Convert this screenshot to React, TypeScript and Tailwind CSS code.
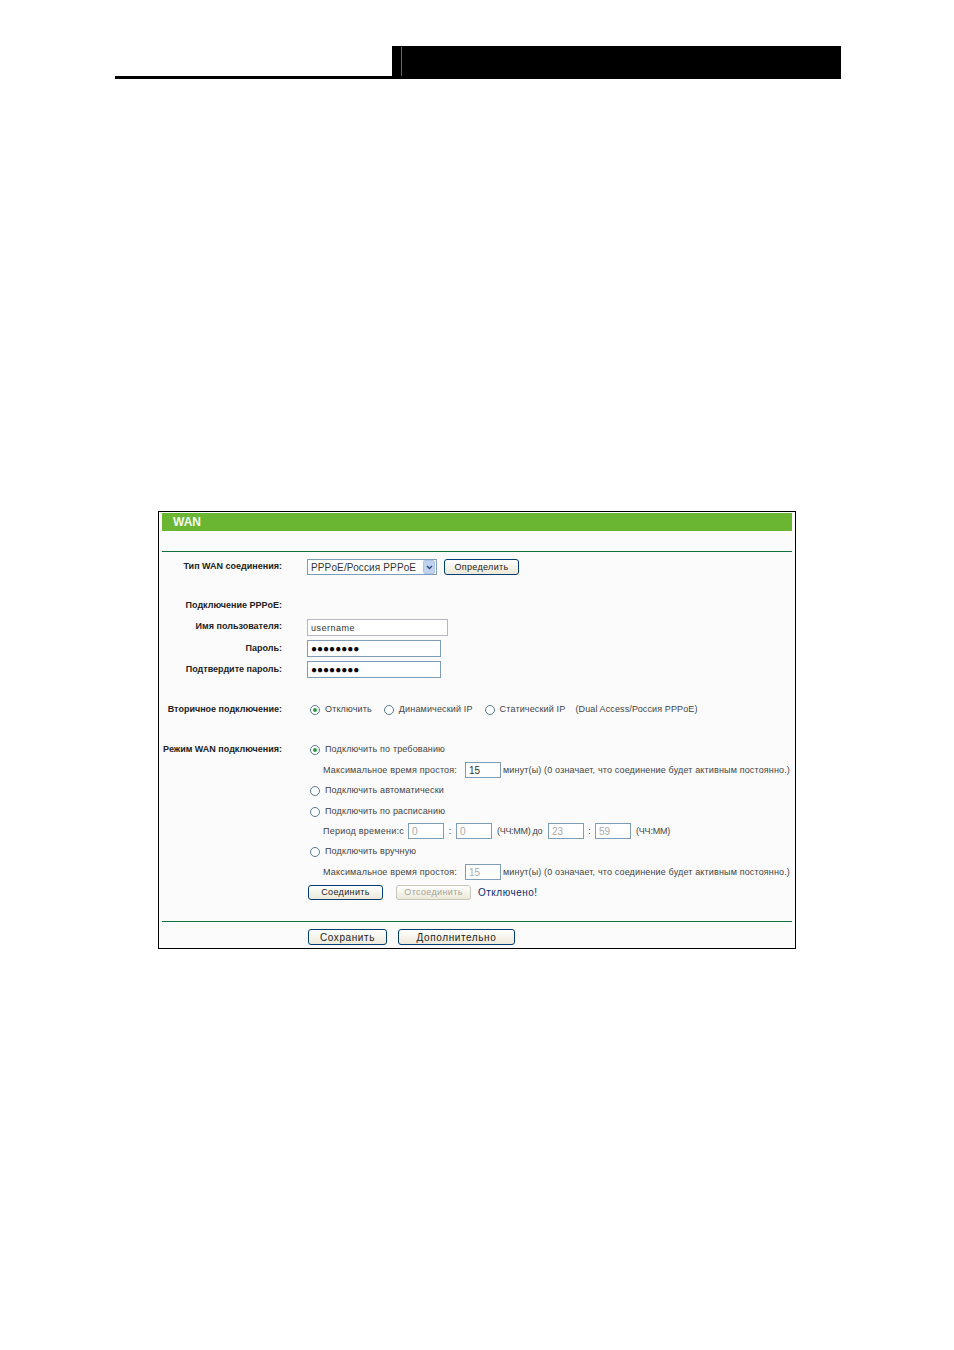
import React from 'react';

const inputBase = "h-full border border-[#7f9db9] bg-white pl-[3px] text-[10px] leading-none flex items-center";
const sectionLabel = "w-[120px] shrink-0 text-right font-bold text-[#222] whitespace-nowrap";

function Radio({ checked, text, className }: { checked?: boolean; text: string; className?: string }) {
    return (
        <div className={`flex items-center ${className || ''}`}>
            <span className="ml-[3px] w-[10px] h-[10px] rounded-full border border-[#5a7a90] bg-white flex items-center justify-center shrink-0">
                {checked && <span className="w-[4px] h-[4px] rounded-full bg-[#2f9e44]" />}
            </span>
            <span className="ml-[5px] tracking-[0.15px]">{text}</span>
        </div>
    );
}

function Btn({ w, text, disabled, large, short, className }: { w: string; text: string; disabled?: boolean; large?: boolean; short?: boolean; className?: string }) {
    return (
        <button className={`${w} ${short ? 'h-[15px]' : 'h-[16px] pt-px'} rounded-[3px] border leading-none bg-gradient-to-b from-white to-[#ece9d8] ${large ? 'text-[10px] tracking-[0.6px]' : 'text-[9px] tracking-[0.35px]'} ${disabled ? 'border-[#c9c7ba] text-[#a5a294]' : 'border-[#003c74] text-[#222]'} ${className || ''}`}>
            {text}
        </button>
    );
}

function TimeBox({ value, disabled, className }: { value: string; disabled?: boolean; className?: string }) {
    return <div className={`${inputBase} w-[36px] pt-px ${disabled ? 'text-[#aaa]' : 'text-[#333]'} ${className || ''}`}>{value}</div>;
}

export default function App() {
    const idleNote = "минут(ы) (0 означает, что соединение будет активным постоянно.)";
    return (
        <div className="min-h-[1350px] bg-white pt-[46px] font-['Liberation_Sans',Arial,sans-serif]">
            {/* Page header */}
            <div className="ml-[115px] w-[726px] h-[33px] flex">
                <div className="w-[277px] border-b-[3px] border-black" />
                <div className="flex-1 bg-black pl-[9px] pt-[1px] pb-[3px]">
                    <div className="w-px h-full bg-[#666]" />
                </div>
            </div>

            {/* Router screenshot */}
            <div className="mt-[432px] ml-[158px] w-[638px] h-[438px] border border-black bg-[#fbfbfb] px-[3px] pt-px text-[9px] text-[#444]">
                <div className="h-[18px] bg-[#6ab633] pl-[11px] flex items-center text-[12px] font-bold text-[#f4f9ee]">WAN</div>
                <div className="mt-[20px] h-px bg-[#0f7038]" />

                <div className="mt-[7px] flex items-center h-[16px]">
                    <div className={sectionLabel}>Тип WAN соединения:</div>
                    <div className="ml-[25px] flex items-center h-full">
                        <div className="w-[130px] h-full border border-[#7f9db9] bg-white flex items-center justify-between pl-[3px] text-[10px] tracking-[0.13px] text-[#333]">
                            PPPoE/Россия PPPoE
                            <span className="w-[12px] h-[14px] mr-px rounded-[2px] bg-[#c1d2ee] border border-[#b0c4e4] flex items-center justify-center">
                                <svg width="7" height="5" viewBox="0 0 7 5"><path d="M1 1l2.5 2.5L6 1" fill="none" stroke="#2a4a80" strokeWidth="1.4" /></svg>
                            </span>
                        </div>
                        <Btn w="w-[75px]" text="Определить" className="ml-[7px]" />
                    </div>
                </div>

                <div className="mt-[23px] h-[16px] w-[120px] flex items-center justify-end font-bold text-[#222] whitespace-nowrap">Подключение PPPoE:</div>
                <div className="mt-[5px] flex items-center h-[17px]">
                    <div className={`${sectionLabel} pb-[2px]`}>Имя пользователя:</div>
                    <div className={`${inputBase} ml-[25px] w-[141px] border-[#b5b8c0] pt-[2px] !text-[9px] tracking-[0.5px] text-[#333]`}>username</div>
                </div>
                <div className="mt-[4px] flex items-center h-[17px]">
                    <div className={sectionLabel}>Пароль:</div>
                    <div className={`${inputBase} ml-[25px] w-[134px] text-black`}>●●●●●●●●</div>
                </div>
                <div className="mt-[4px] flex items-center h-[17px]">
                    <div className={sectionLabel}>Подтвердите пароль:</div>
                    <div className={`${inputBase} ml-[25px] w-[134px] text-black`}>●●●●●●●●</div>
                </div>

                <div className="mt-[23px] flex items-center h-[17px]">
                    <div className={sectionLabel}>Вторичное подключение:</div>
                    <div className="ml-[25px] flex items-center whitespace-nowrap pt-px">
                        <Radio checked text="Отключить" />
                        <Radio text="Динамический IP" className="ml-[9px]" />
                        <Radio text="Статический IP" className="ml-[9px]" />
                        <span className="ml-[10px] tracking-[0.12px]">(Dual Access/Россия PPPoE)</span>
                    </div>
                </div>

                <div className="mt-[23px] flex items-center h-[17px]">
                    <div className={sectionLabel}>Режим WAN подключения:</div>
                    <Radio checked text="Подключить по требованию" className="ml-[25px]" />
                </div>
                <div className="mt-[4px] ml-[161px] flex items-center h-[16px] whitespace-nowrap">
                    <span className="w-[142px] shrink-0 pt-[2px] tracking-[0.19px]">Максимальное время простоя:</span>
                    <TimeBox value="15" />
                    <span className="ml-[2px] pt-[2px] tracking-[0.15px]">{idleNote}</span>
                </div>
                <div className="mt-[4px] ml-[145px] h-[17px] flex items-center"><Radio text="Подключить автоматически" /></div>
                <div className="mt-[4px] ml-[145px] h-[17px] flex items-center"><Radio text="Подключить по расписанию" /></div>
                <div className="mt-[3px] ml-[161px] flex items-center h-[16px] whitespace-nowrap">
                    <span className="w-[85px] shrink-0 pt-[2px] tracking-[0.25px]">Период времени:с</span>
                    <TimeBox value="0" disabled />
                    <span className="w-[12px] pt-[2px] text-center">:</span>
                    <TimeBox value="0" disabled />
                    <span className="ml-[5px] w-[51px] shrink-0 pt-[2px] tracking-[-0.3px]">(ЧЧ:ММ) до</span>
                    <TimeBox value="23" disabled />
                    <span className="w-[11px] pt-[2px] text-center">:</span>
                    <TimeBox value="59" disabled />
                    <span className="ml-[5px] pt-[2px] tracking-[-0.2px]">(ЧЧ:ММ)</span>
                </div>
                <div className="mt-[4px] ml-[145px] h-[17px] flex items-center"><Radio text="Подключить вручную" /></div>
                <div className="mt-[4px] ml-[161px] flex items-center h-[16px] whitespace-nowrap">
                    <span className="w-[142px] shrink-0 pt-[2px] tracking-[0.19px]">Максимальное время простоя:</span>
                    <TimeBox value="15" disabled />
                    <span className="ml-[2px] pt-[2px] tracking-[0.15px]">{idleNote}</span>
                </div>
                <div className="mt-[5px] ml-[146px] flex items-center h-[15px]">
                    <Btn w="w-[75px]" text="Соединить" short />
                    <Btn w="w-[75px]" text="Отсоединить" disabled short className="ml-[13px]" />
                    <span className="ml-[7px] pb-px text-[10px] tracking-[0.5px] text-[#0a2a6e]">Отключено!</span>
                </div>

                <div className="mt-[21px] h-px bg-[#0f7038]" />
                <div className="mt-[7px] ml-[146px] flex items-center h-[16px]">
                    <Btn w="w-[79px]" text="Сохранить" large />
                    <Btn w="w-[117px]" text="Дополнительно" large className="ml-[11px]" />
                </div>
            </div>
        </div>
    );
}
